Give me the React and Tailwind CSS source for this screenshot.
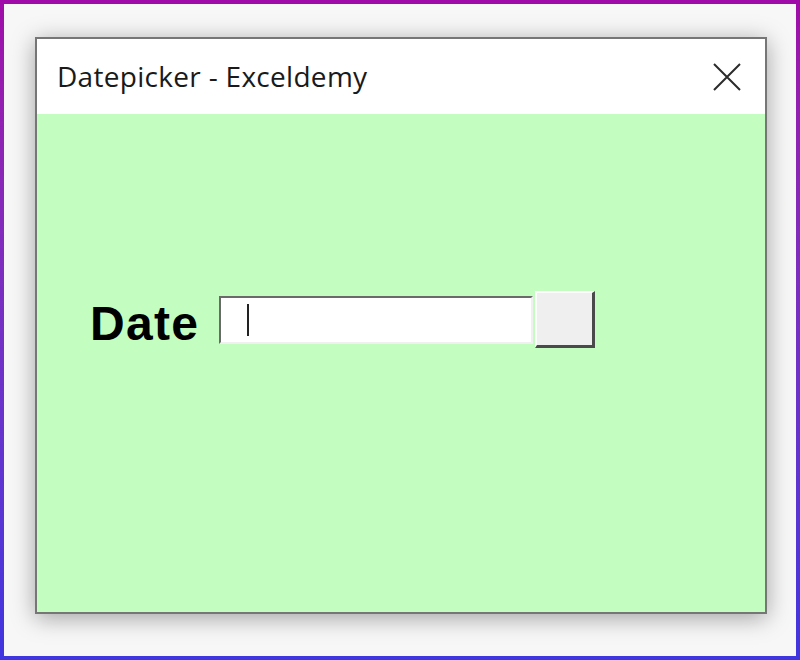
import React from 'react';

const CloseIcon = () => (
  <svg width="28" height="28" viewBox="0 0 28 28" fill="none">
    <path d="M1 1 L27 27 M27 1 L1 27" stroke="#2b2b2b" strokeWidth="2" />
  </svg>
);

const App = () => {
  return (
    <div className="w-[800px] h-[660px] p-[4px] bg-gradient-to-b from-[#a00aa8] to-[#3f35e0]">
      <div className="w-full h-full bg-[#f7f7f7] pl-[31px] pt-[33px]">
        {/* Window */}
        <div className="w-[732px] h-[577px] flex flex-col border-2 border-[#767676] bg-white shadow-[0_4px_22px_rgba(0,0,0,0.35)]">
          {/* Title bar */}
          <div className="h-[75px] flex items-center justify-between pl-[20px] pr-[24px] bg-white">
            <span className="text-[28px] tracking-[0.3px] text-[#1a1a1a] font-['Open_Sans',sans-serif] leading-none pb-[2px]">
              Datepicker - Exceldemy
            </span>
            <CloseIcon />
          </div>
          {/* Body */}
          <div className="flex-1 bg-[#c3fdc0] pt-[177px] pl-[53px]">
            <div className="flex items-center">
              <span className="w-[129px] pt-[9px] text-[48px] tracking-[1.3px] font-bold text-black leading-none font-['Liberation_Sans',Arial,sans-serif]">
                Date
              </span>
              <div className="w-[314px] h-[48px] bg-white border-2 border-t-[#6a6a6a] border-l-[#6a6a6a] border-b-[#f0f0f0] border-r-[#f0f0f0] flex items-center pl-[26px]">
                <div className="w-[2px] h-[32px] bg-[#222]" />
              </div>
              <button className="ml-[2px] w-[60px] h-[57px] bg-[#efefef] border-t-2 border-l-2 border-b-[3px] border-r-[3px] border-t-white border-l-white border-b-[#4a4a4a] border-r-[#4a4a4a]" />
            </div>
          </div>
        </div>
      </div>
    </div>
  );
};

export default App;
